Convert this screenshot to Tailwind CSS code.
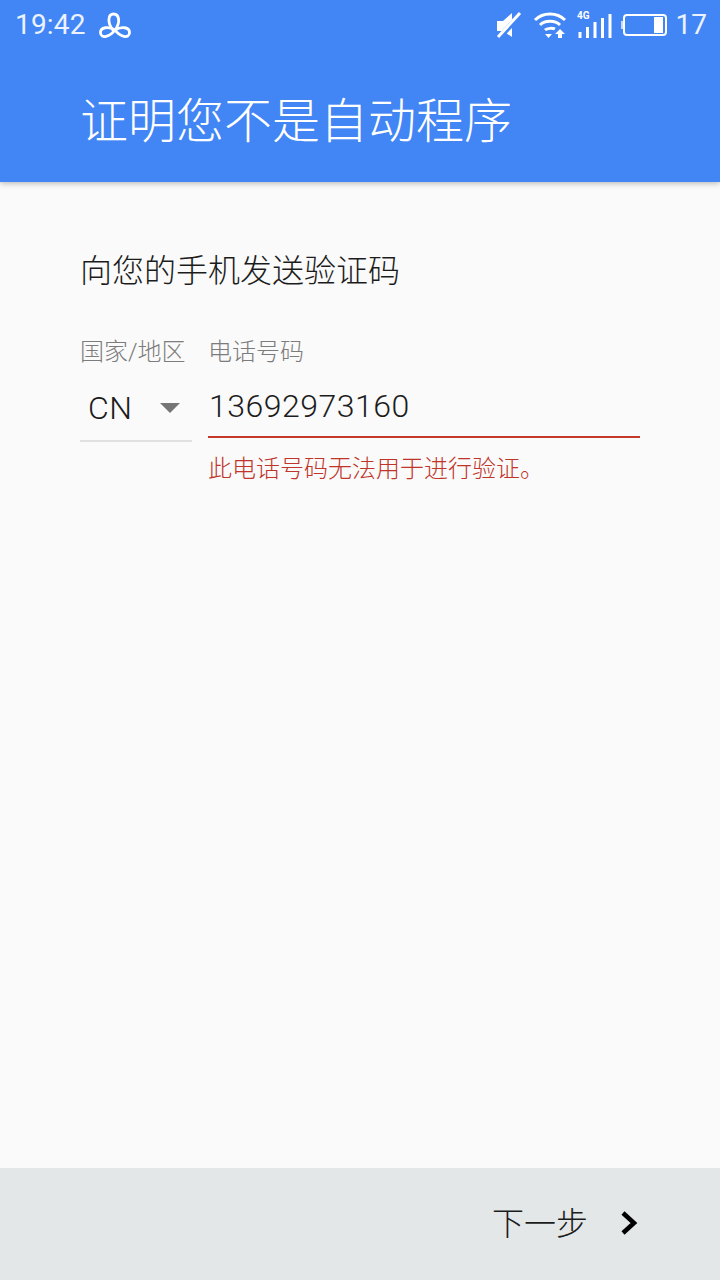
<!DOCTYPE html>
<html lang="zh-CN">
<head>
<meta charset="utf-8">
<script src="https://cdn.jsdelivr.net/npm/@tailwindcss/browser@4"></script>
</head>
<body class="m-0">
<div class="w-[720px] h-[1280px] flex flex-col bg-[#fafafa] overflow-hidden font-['Roboto','Noto_Sans_CJK_SC',sans-serif]">
  <header class="h-[182px] bg-[#4285f4] shadow-[0_1px_6px_rgba(0,0,0,0.3)] relative z-10 flex flex-col text-white shrink-0">
    <div class="h-[50px] flex items-center pl-[15px] pr-[13px]">
      <span class="text-[28px] leading-[50px] text-white/90 tracking-[0.2px]">19:42</span>
      <svg class="ml-[12px] mt-[2px]" width="34" height="30" viewBox="0 0 34 30" fill="none" stroke="white" stroke-width="2.800" stroke-linecap="round" stroke-linejoin="round"><path d="M15 19 C 9 12, 10 3, 15.500 3 C 21 3, 23 11, 17 19"/><path d="M17 19 C 12 26, 3 28, 2.500 22 C 2 16, 11 15, 17 19"/><path d="M17 19 C 22 26, 31 28, 31.500 22 C 32 16, 23 15, 17 19"/></svg>
      <div class="flex-1"></div>
      <svg width="26" height="28" viewBox="0 0 26 28" fill="white"><path d="M1 10h6l9-8v24l-9-6H1z"/><path d="M3 27 L24 4" stroke="#4285f4" stroke-width="5.500"/><path d="M2 26 L24 2" stroke="white" stroke-width="3"/></svg>
      <svg class="ml-[11px]" width="34" height="28" viewBox="0 0 34 28" fill="none" stroke="white" stroke-width="3"><path d="M2 9 C 10 1, 24 1, 32 9"/><path d="M7 14 C 12 9, 22 9, 27 14"/><path d="M12 19 C 14 17, 20 17, 22 18"/><path d="M12 23 h7 l-3.500 4z" fill="white" stroke="none"/><path d="M22 23 l5 -5 l5 5 h-3 v4 h-4 v-4z" fill="white" stroke="none"/></svg>
      <svg class="ml-[10px]" width="36" height="30" viewBox="0 0 36 30" fill="white"><text x="0" y="9" font-size="10" font-weight="700" font-family="Roboto">4G</text><rect x="1.500" y="22" width="3" height="6"/><rect x="9" y="17" width="3" height="11"/><rect x="16.500" y="12" width="3" height="16"/><rect x="24" y="8" width="3" height="20"/><rect x="31.500" y="4" width="3" height="24"/></svg>
      <div class="ml-[10px] w-[44px] h-[22px] border-2 border-white rounded-[4px] flex justify-end p-[1px] pr-[2px] relative">
        <div class="w-[9px] h-full bg-white"></div>
        <div class="absolute left-[-4px] top-[5px] w-[2px] h-[8px] bg-white/70"></div>
      </div>
      <span class="ml-[9px] text-[28px] leading-[50px] text-white/90">17</span>
    </div>
    <div class="flex-1 flex items-center pl-[80px] pt-[12px]">
      <h1 class="text-[48px] leading-[60px] font-light">证明您不是自动程序</h1>
    </div>
  </header>

  <main class="flex-1 pt-[69px] px-[80px]">
    <p class="text-[32px] leading-[40px] text-[#1c1c1c] font-light">向您的手机发送验证码</p>
    <div class="mt-[45px] flex gap-[16px]">
      <div class="w-[112px]">
        <div class="text-[24px] leading-[32px] text-[#7c7c7c] font-light whitespace-nowrap">国家/地区</div>
        <div class="border-b-2 border-[#e0e0e0] flex items-center pl-[8px] pt-[7px] mt-[1px] h-[73px]">
          <span class="text-[32px] leading-[40px] text-[#1c1c1c] font-light tracking-[0.5px]">CN</span>
          <span class="ml-[27px] w-0 h-0 border-x-[10px] border-x-transparent border-t-[10px] border-t-[#757575]"></span>
        </div>
      </div>
      <div class="w-[432px]">
        <div class="text-[24px] leading-[32px] text-[#7c7c7c] font-light">电话号码</div>
        <div class="h-[69px] border-b-2 border-[#c5392b] flex items-center mt-[1px] pt-[6px]">
          <span class="text-[32px] leading-[40px] text-[#1c1c1c] font-light tracking-[0.5px] pl-px">13692973160</span>
        </div>
        <p class="mt-[15px] text-[24px] leading-[32px] text-[#c0352a] font-light">此电话号码无法用于进行验证。</p>
      </div>
    </div>
  </main>

  <footer class="h-[112px] bg-[#e3e7e8] flex items-center justify-end shrink-0 pr-[81px]">
    <span class="text-[32px] leading-[40px] text-[#1c1c1c] font-light">下一步</span>
    <svg class="ml-[31px] mb-[2px]" width="20" height="26" viewBox="0 0 20 26" fill="none" stroke="black" stroke-width="4.500"><path d="M4 3 L15 13 L4 23"/></svg>
  </footer>
</div>
</body>
</html>
